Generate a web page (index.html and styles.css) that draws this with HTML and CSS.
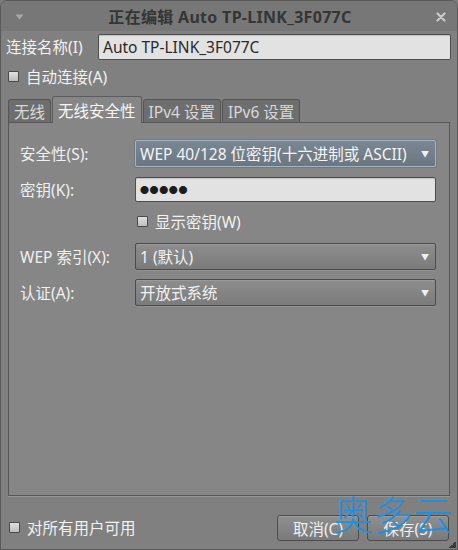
FILE: index.html
```html
<!DOCTYPE html>
<html lang="zh-CN">
<head>
<meta charset="utf-8">
<title>正在编辑 Auto TP-LINK_3F077C</title>
<link rel="stylesheet" href="styles.css">
</head>
<body>
<div class="window">
  <header class="titlebar">
    <span class="menu-arrow">
      <svg width="9" height="6" viewBox="0 0 9 6"><path d="M0.5 0.5 L8.5 0.5 L4.5 5.5 Z" fill="#a8a8a8"/></svg>
    </span>
    <span class="title">正在编辑 Auto TP-LINK_3F077C</span>
    <span class="close">
      <svg width="10" height="10" viewBox="0 0 10 10"><path d="M1.5 1.5 L8.5 8.5 M8.5 1.5 L1.5 8.5" stroke="#c9c9c9" stroke-width="2.2" stroke-linecap="round"/></svg>
    </span>
  </header>

  <div class="name-row">
    <label class="name-label">连接名称(I)</label>
    <div class="entry name-entry">Auto TP-LINK_3F077C</div>
  </div>

  <div class="check-row auto-row">
    <span class="checkbox"></span>
    <span>自动连接(A)</span>
  </div>

  <nav class="tabs">
    <span class="tab">无线</span>
    <span class="tab active">无线安全性</span>
    <span class="tab">IPv4 设置</span>
    <span class="tab">IPv6 设置</span>
  </nav>

  <section class="panel">
    <div class="form">
      <label class="lbl r1">安全性(S):</label>
      <div class="combo focused r1">
        <span>WEP 40/128 位密钥(十六进制或 ASCII)</span>
        <span class="arrow">▼</span>
      </div>

      <label class="lbl r2">密钥(K):</label>
      <div class="entry key-entry r2">●●●●●</div>

      <div class="check-row show-key r3">
        <span class="checkbox"></span>
        <span>显示密钥(W)</span>
      </div>

      <label class="lbl r4">WEP 索引(X):</label>
      <div class="combo r4">
        <span>1 (默认)</span>
        <span class="arrow">▼</span>
      </div>

      <label class="lbl r5">认证(A):</label>
      <div class="combo r5">
        <span>开放式系统</span>
        <span class="arrow">▼</span>
      </div>
    </div>
  </section>

  <footer class="footer">
    <div class="check-row">
      <span class="checkbox"></span>
      <span>对所有用户可用</span>
    </div>
    <div class="buttons">
      <button class="btn">取消(C)</button>
      <button class="btn">保存(S)</button>
    </div>
    <span class="grip"></span>
    <span class="watermark">奥多云</span>
  </footer>
</div>
</body>
</html>
```

FILE: styles.css
```css
* { box-sizing: border-box; }

html, body {
  margin: 0;
  padding: 0;
  background: #7c7c7c;
}

body {
  font-family: "Noto Sans", "Noto Sans CJK SC", sans-serif;
  font-size: 15.5px;
  color: #f2f2f2;
}

.window {
  position: relative;
  width: 458px;
  height: 550px;
  background: #808080;
  border: 1px solid #5a5a5a;
  border-radius: 7px 7px 0 0;
  overflow: hidden;
  display: flex;
  flex-direction: column;
}

/* title bar */
.titlebar {
  height: 30px;
  flex: none;
  display: flex;
  align-items: center;
  padding: 0 11px 0 14px;
  background: #777777;
}
.menu-arrow { display: flex; width: 9px; margin-top: 2px; }
.title {
  flex: 1;
  text-align: center;
  font-weight: bold;
  font-size: 16px;
  color: #353535;
  letter-spacing: 0.3px;
}
.close { display: flex; width: 10px; margin-top: 2px; }

/* connection name */
.name-row {
  height: 27px;
  margin-top: 2px;
  flex: none;
  display: flex;
  align-items: center;
  padding: 0 6px 0 5px;
}
.name-label { width: 92px; }
.entry {
  height: 26px;
  background: #e2e2e2;
  border: 1px solid #4e4e4e;
  border-radius: 2px;
  color: #2a2a2a;
  display: flex;
  align-items: center;
  padding-left: 4px;
  box-shadow: inset 0 1px 1px rgba(0,0,0,0.15);
}
.name-entry { flex: 1; }

/* check rows */
.check-row {
  display: flex;
  align-items: center;
  gap: 7px;
}
.checkbox {
  width: 11px;
  height: 11px;
  background: linear-gradient(#e0e0e0, #bdbdbd);
  border: 1px solid #4a4a4a;
  border-radius: 1px;
  flex: none;
}
.auto-row {
  height: 20px;
  margin-top: 6px;
  padding-left: 7px;
  flex: none;
}

/* notebook tabs */
.tabs {
  height: 26px;
  margin-top: 10px;
  padding-left: 7px;
  display: flex;
  align-items: flex-end;
  flex: none;
}
.tab {
  height: 23px;
  padding: 0 5px;
  background: #6e6e6e;
  border: 1px solid #555;
  border-bottom: none;
  border-radius: 3px 3px 0 0;
  color: #d8d8d8;
  display: flex;
  align-items: center;
  margin-right: 1px;
}
.tab.active {
  height: 27px;
  margin-bottom: -1px;
  background: #868686;
  color: #f6f6f6;
  position: relative;
  z-index: 1;
  border-color: #5c5c5c;
}

.panel {
  margin: 0 7px 0 7px;
  height: 374px;
  flex: none;
  background: #868686;
  border: 1px solid #575757;
  box-shadow: 0 1px 0 #959595;
  padding: 17px 13px 0 11px;
}

.form {
  display: grid;
  grid-template-columns: 115px 1fr;
  grid-template-rows: 27px 25px 20px 27px 27px;
  row-gap: 10px;
  align-items: center;
}
.form .r3 { margin-top: -2px; }
.form .r4 { margin-top: 1px; }
.lbl { grid-column: 1; color: #f0f0f0; }
.combo, .key-entry, .show-key { grid-column: 2; }
.r1 { grid-row: 1; }
.r2 { grid-row: 2; }
.r3 { grid-row: 3; }
.r4 { grid-row: 4; }
.r5 { grid-row: 5; }

.show-key { padding-left: 2px; }

.combo {
  height: 27px;
  display: flex;
  align-items: center;
  justify-content: space-between;
  padding: 0 5px 0 4px;
  border: 1px solid #4b4b4b;
  border-radius: 2px;
  background: linear-gradient(#8d8d8d, #7b7b7b);
  box-shadow: inset 0 1px 0 #9a9a9a, 0 1px 0 #939393;
  color: #f2f2f2;
  white-space: nowrap;
}
.combo.focused {
  background: linear-gradient(#7a8792, #6b7681);
  border-color: #a4b5c2;
  box-shadow: 0 0 0 1px #6f7a83;
  color: #f4f4f4;
}
.arrow {
  font-size: 8px;
  color: #f0f0f0;
  margin-right: 1px;
}
.key-entry {
  height: 25px;
  font-size: 9px;
  letter-spacing: 0.6px;
  color: #1c1c1c;
}

/* bottom row */
.footer {
  position: relative;
  flex: 1;
  display: flex;
  align-items: center;
  justify-content: space-between;
  padding: 10px 8px 0 8px;
}
.buttons { display: flex; gap: 8px; }
.btn {
  width: 82px;
  height: 26px;
  font: inherit;
  color: #f0f0f0;
  border: 1px solid #4c4c4c;
  border-radius: 3px;
  background: linear-gradient(#8f8f8f, #7a7a7a);
  box-shadow: inset 0 1px 0 #9d9d9d;
}
.grip {
  position: absolute;
  right: 1px;
  bottom: 1px;
  width: 7px;
  height: 7px;
  background: linear-gradient(135deg, transparent 50%, #3c3c3c 50%);
}
.watermark {
  position: absolute;
  left: 332px;
  top: -7px;
  font-family: "Noto Sans CJK SC", sans-serif;
  font-weight: 300;
  font-size: 40px;
  color: #1e90e4;
  letter-spacing: 0;
  line-height: 1.2;
  pointer-events: none;
}
```
